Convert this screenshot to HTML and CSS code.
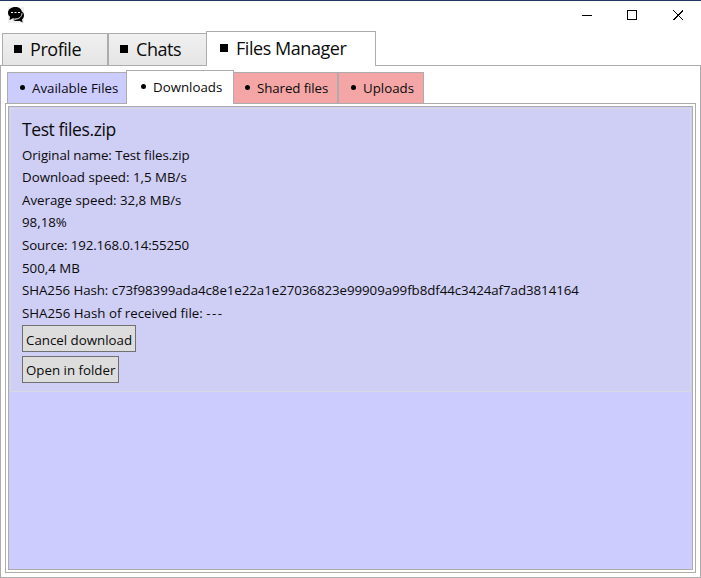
FILE: index.html
```html
<!DOCTYPE html>
<html lang="en">
<head>
<meta charset="utf-8">
<title>Files Manager</title>
<link rel="stylesheet" href="styles.css">
</head>
<body>
<div class="window">
  <header class="titlebar">
    <svg class="logo" width="16" height="16" viewBox="0 0 16 16">
      <rect width="16" height="16" fill="#f0f0f0"/>
      <path d="M14.3 4.5C16.8 7 16.3 10.7 14 12.3L14.6 15.5L11.5 13.7C9 14.5 6.500 14 4.800 12.700C10 13 14 9.500 14.300 4.500Z" fill="#000"/>
      <path d="M7.500 0C11.500 0 14 2.500 14 5.800C14 9.200 11 11.700 7.500 11.700C6.700 11.700 5.800 11.600 5 11.300L1.500 13L2 9.800C.7 8.800 0 7.400 0 5.800C0 2.500 3 0 7.500 0Z" fill="#000"/>
      <path d="M14 6C14 9.600 11 12.200 7 12.200" fill="none" stroke="#f0f0f0" stroke-width=".8"/>
      <path d="M3 5h2v1H3zM6.500 5h2v1h-2zM10 5h2v1h-2z" fill="#fff"/>
    </svg>
    <div class="controls">
      <svg width="11" height="11"><path d="M1 5.500H11" stroke="#000"/></svg>
      <svg width="11" height="11"><path d="M.5 .5H9.500V9.500H.5Z" stroke="#000" fill="none"/></svg>
      <svg width="11" height="11"><path d="M.5 .5L10 10M10 .5L.5 10" stroke="#000" fill="none"/></svg>
    </div>
  </header>
  <nav class="tabs">
    <div class="tab profile"><i class="square"></i><span>Profile</span></div>
    <div class="tab chats"><i class="square"></i><span>Chats</span></div>
    <div class="tab manager active"><i class="square"></i><span>Files Manager</span></div>
  </nav>
  <main class="page">
    <nav class="subtabs">
      <div class="subtab available"><i class="dot"></i><span>Available Files</span></div>
      <div class="subtab downloads active"><i class="dot"></i><span>Downloads</span></div>
      <div class="subtab shared"><i class="dot"></i><span>Shared files</span></div>
      <div class="subtab uploads"><i class="dot"></i><span>Uploads</span></div>
    </nav>
    <section class="pane">
      <div class="list">
        <article class="item">
          <h1>Test files.zip</h1>
          <p class="original">Original name: Test files.zip</p>
          <p class="speed">Download speed: 1,5 MB/s</p>
          <p class="average">Average speed: 32,8 MB/s</p>
          <p class="percent">98,18%</p>
          <p class="source">Source: 192.168.0.14:55250</p>
          <p class="size">500,4 MB</p>
          <p class="hash">SHA256 Hash: c73f98399ada4c8e1e22a1e27036823e99909a99fb8df44c3424af7ad3814164</p>
          <p class="received">SHA256 Hash of received file: <span class="dashes">---</span></p>
          <button class="cancel">Cancel download</button>
          <button class="open">Open in folder</button>
        </article>
      </div>
    </section>
  </main>
</div>
</body>
</html>
```
FILE: styles.css
```css
* { box-sizing: border-box; }
body { margin: 0; background: #fff; color: #0b0b0b; font-family: "Open Sans", "Noto Sans", sans-serif; font-size: 13.3px; }
.window { width: 701px; height: 578px; display: flex; flex-direction: column; border-top: 1px solid #1f3864; overflow: hidden; }
.titlebar { height: 30px; display: flex; justify-content: space-between; align-items: flex-start; padding: 6px 17px 0 8px; }
.logo { display: block; }
.controls { display: flex; gap: 35px; padding-top: 3px; }
.controls svg { display: block; shape-rendering: crispEdges; }
.tabs { height: 35px; display: flex; align-items: flex-end; padding-left: 2px; flex: none; margin-bottom: -1px; z-index: 1; }
.tab { height: 33px; display: flex; align-items: center; border: 1px solid #acacac; background: linear-gradient(#f0f0f0, #e5e5e5); font-size: 18px; letter-spacing: -.45px; padding-left: 11px; white-space: nowrap; }
.tab span { margin: -2px 0 0 8px; }
.profile { width: 106px; }
.chats { width: 98px; border-right: 0; }
.tab.active { width: 170px; height: 35px; background: #fff; border-bottom: 0; padding-left: 13px; }
.square { width: 8px; height: 8px; background: #000; margin-top: -1px; }
.active .square { margin-top: -2px; }
.page { flex: 1; border: 1px solid #acacac; padding: 4px; display: flex; flex-direction: column; min-height: 0; }
.subtabs { height: 34px; flex: none; display: flex; align-items: flex-end; padding-left: 2px; margin-bottom: -1px; z-index: 1; }
.subtab { height: 32px; display: flex; align-items: center; border: 1px solid #acacac; white-space: nowrap; padding-left: 12px; }
.subtab span { margin-left: 7px; }
.dot { width: 5px; height: 5px; border-radius: 50%; background: #000; margin-top: -2px; }
.available { width: 119px; background: #ccccff; border-right: 0; }
.subtab.active { width: 108px; height: 34px; background: #fff; border-bottom: 0; padding-left: 14px; }
.subtab.active span { margin-top: -2px; }
.shared { width: 104px; background: #f4a6a6; border-left: 0; padding-left: 11px; letter-spacing: -.09px; }
.uploads { width: 86px; background: #f4a6a6; }
.pane { flex: 1; border: 1px solid #acacac; padding: 2px; min-height: 0; }
.list { height: 100%; background: #ccccff; border: 1px solid #acacac; padding: 1px; }
.item { height: 284px; background: #cfcef4; border: 1px solid #d7d9dd; padding: 8px 11px 0; display: flex; flex-direction: column; align-items: flex-start; }
h1 { margin: 0; font-weight: 400; font-size: 17.5px; letter-spacing: -.4px; line-height: 24px; height: 27px; white-space: nowrap; }
p { margin: 0; height: 22.6px; line-height: 22px; white-space: nowrap; }
.original { letter-spacing: -.08px; }
.speed, .percent, .hash { line-height: 21px; }
.source { letter-spacing: -.12px; }
.hash { letter-spacing: -.055px; }
.dashes { letter-spacing: 1.5px; }
button { font: inherit; color: inherit; height: 27px; border: 1px solid #707070; background: #dddddd; padding: 2px 0 0 3px; margin: 0; text-align: left; white-space: nowrap; }
.cancel { width: 114px; padding-top: 3px; }
.open { width: 97px; margin-top: 4px; }
```
